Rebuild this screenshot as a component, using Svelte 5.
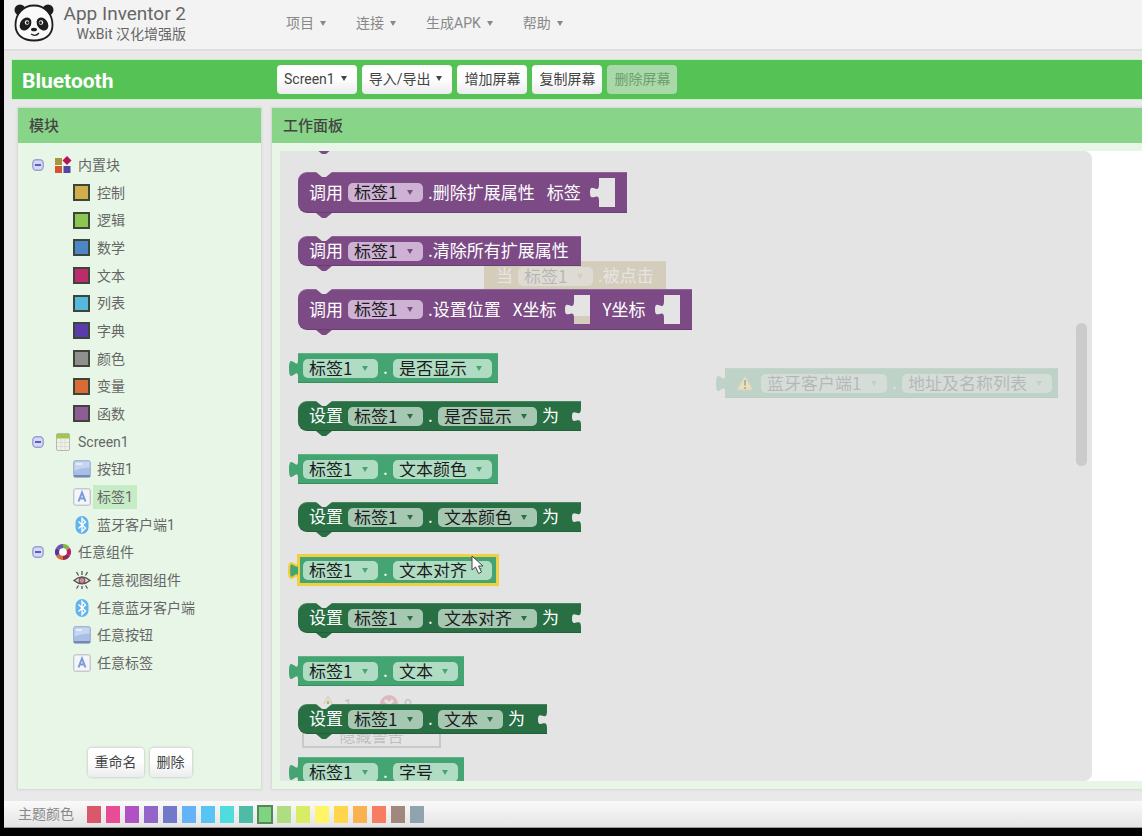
<script>
  const menus = ['项目', '连接', '生成APK', '帮助'];

  const tools = [
    { text: 'Screen1', arrow: true },
    { text: '导入/导出', arrow: true },
    { text: '增加屏幕' },
    { text: '复制屏幕' },
    { text: '删除屏幕', disabled: true }
  ];

  const tree = [
    { root: true, icon: 'blocks', text: '内置块' },
    { color: '#cfae4b', text: '控制' },
    { color: '#8bc653', text: '逻辑' },
    { color: '#4d86c6', text: '数学' },
    { color: '#bc2c6c', text: '文本' },
    { color: '#55b9dc', text: '列表' },
    { color: '#5a3bae', text: '字典' },
    { color: '#8f8f8f', text: '颜色' },
    { color: '#d96b36', text: '变量' },
    { color: '#8f5c98', text: '函数' },
    { root: true, icon: 'screen', text: 'Screen1' },
    { icon: 'button', text: '按钮1' },
    { icon: 'label', text: '标签1' },
    { icon: 'bluetooth', text: '蓝牙客户端1' },
    { root: true, icon: 'ring', text: '任意组件' },
    { icon: 'eye', text: '任意视图组件' },
    { icon: 'bluetooth', text: '任意蓝牙客户端' },
    { icon: 'button', text: '任意按钮' },
    { icon: 'label', text: '任意标签' }
  ];

  const blocks = [
    { kind: 'call', method: '.删除扩展属性', args: [{ name: '标签' }] },
    { kind: 'call', method: '.清除所有扩展属性', args: [] },
    { kind: 'call', method: '.设置位置', args: [{ name: 'X坐标', behind: true }, { name: 'Y坐标' }] },
    { kind: 'get', prop: '是否显示' },
    { kind: 'set', prop: '是否显示' },
    { kind: 'get', prop: '文本颜色' },
    { kind: 'set', prop: '文本颜色' },
    { kind: 'get', prop: '文本对齐', active: true },
    { kind: 'set', prop: '文本对齐' },
    { kind: 'get', prop: '文本' },
    { kind: 'set', prop: '文本' },
    { kind: 'get', prop: '字号' }
  ];

  const swatches = [
    '#d9596b', '#e84c92', '#b152c4', '#9265c9', '#7279c9', '#64b2f7',
    '#57c4f3', '#50dbdc', '#4dbca6', '#80d480', '#aede80', '#d9ec66',
    '#fff566', '#ffd54a', '#fab150', '#f77d62', '#a1887f', '#8fa4ae'
  ];

  let selected = $state(12);
  let theme = $state('#80d480');
</script>

{#snippet arrow()}
  <svg class="arrow" viewBox="0 0 6 5" aria-hidden="true"><path d="M0 0h6L3 5z" fill="currentColor" /></svg>
{/snippet}

{#snippet pick(text)}
  <span class="pick">
    <select aria-label={text}><option>{text}</option></select>
    {@render arrow()}
  </span>
{/snippet}

{#snippet tab()}
  <svg class="tab" viewBox="0 5 8 15" preserveAspectRatio="none" aria-hidden="true">
    <path d="M8 5c0 10-8-8-8 7.500s8-2.500 8 7.500" />
  </svg>
{/snippet}

{#snippet connectors()}
  <svg class="notch" viewBox="0 0 16 5" aria-hidden="true"><path d="M0 0L6 5h4L16 0z" /></svg>
  <svg class="bump" viewBox="0 0 16 5" aria-hidden="true"><path d="M0 0L6 5h4L16 0z" /></svg>
{/snippet}

{#snippet icon(name)}
  <svg class="icon" viewBox="0 0 18 18" aria-hidden="true">
    {#if name === 'blocks'}
      <rect x="1" y="2" width="7" height="7" fill="#a8953c" />
      <path d="M13 0l4.500 4.500L13 9 8.500 4.500z" fill="#b31557" />
      <rect x="1" y="10" width="7" height="7" fill="#d8532b" />
      <rect x="9.500" y="10" width="7" height="7" fill="#5246a5" />
    {:else if name === 'screen'}
      <rect x="2.500" y=".5" width="13" height="17" rx="1.500" fill="#f1f1ec" stroke="#b5b9ae" />
      <path d="M2.500 1h13v4.500h-13z" fill="#a3c552" />
      <path d="M3 9.500h12M3 13.500h12M7 6v11M11 6v11" stroke="#d8d8d2" stroke-width=".8" />
    {:else if name === 'button'}
      <rect x=".7" y=".7" width="16.600" height="16.600" rx="1.500" fill="#a9bfe5" stroke="#9cabc8" />
      <path d="M1.500 1.500h15v6c-5 0-9 1-15 3z" fill="#c5d5f2" />
      <path d="M3 3h6v2H3z" fill="#e6edfb" />
      <path d="M1 16h16" stroke="#7388b4" stroke-width="2" />
    {:else if name === 'label'}
      <rect x=".8" y=".8" width="16.400" height="16.400" rx="1.500" fill="#f3f5fb" stroke="#b4b6bb" />
      <path d="M5.500 13.500L9 4.500l3.500 9M6.800 10.500h4.400" fill="none" stroke="#7d9bd6" stroke-width="2" />
    {:else if name === 'bluetooth'}
      <rect x="2.500" y="0" width="13" height="18" rx="6.500" fill="#5fb4ee" />
      <path d="M5.500 5.500l7 6.500L9 15.500v-13L12.500 6l-7 6.500" fill="none" stroke="#fff" stroke-width="1.400" />
    {:else if name === 'ring'}
      <g fill="none" stroke-width="4.500">
        <path d="M9 3.200A5.800 5.800 0 0 1 14 6.100" stroke="#7fb83c" />
        <path d="M14 6.100A5.800 5.800 0 0 1 14 11.900" stroke="#c21a68" />
        <path d="M14 11.900A5.800 5.800 0 0 1 9 14.800" stroke="#8e2b55" />
        <path d="M9 14.800A5.800 5.800 0 0 1 4 11.900" stroke="#dd6d38" />
        <path d="M4 11.900A5.800 5.800 0 0 1 4 6.100" stroke="#5335a0" />
        <path d="M4 6.100A5.800 5.800 0 0 1 9 3.200" stroke="#6c56b4" />
      </g>
      <circle cx="9" cy="9" r="3.800" fill="#fff" />
    {:else if name === 'eye'}
      <path d="M1 9.500Q9 2.500 17 9.500 9 16 1 9.500z" fill="#e9dcdc" stroke="#5b5252" stroke-width="1.500" />
      <circle cx="9" cy="9.500" r="3" fill="#c58d97" stroke="#594a4e" />
      <path d="M9 4V0M5.500 4.500L3.500 1M12.500 4.500L14.500 1M9 15v3M5.500 14.500L3.500 17.500M12.500 14.500l2 3" stroke="#555" stroke-width="1.300" />
    {/if}
  </svg>
{/snippet}

<div class="app">
  <header>
    <svg class="panda" viewBox="0 0 40 38" role="img" aria-label="App Inventor 2">
      <circle cx="6" cy="6" r="5.500" fill="#1d1d1d" />
      <circle cx="34" cy="6" r="5.500" fill="#1d1d1d" />
      <path d="M20 1.500C31 1.500 38.500 10 38.500 21 38.500 31 31 36.500 20 36.500S1.500 31 1.500 21C1.500 10 9 1.500 20 1.500z" fill="#fafafa" stroke="#1d1d1d" stroke-width="1.800" />
      <ellipse cx="11.500" cy="20" rx="5.300" ry="7" transform="rotate(35 11.500 20)" fill="#1d1d1d" />
      <ellipse cx="28.500" cy="20" rx="5.300" ry="7" transform="rotate(-35 28.500 20)" fill="#1d1d1d" />
      <circle cx="13" cy="18.500" r="2.200" fill="#fff" /><circle cx="13.400" cy="18.700" r="1.400" fill="#222" />
      <circle cx="27" cy="18.500" r="2.200" fill="#fff" /><circle cx="26.600" cy="18.700" r="1.400" fill="#222" />
      <ellipse cx="20" cy="25.500" rx="3" ry="1.800" fill="#1d1d1d" />
      <path d="M17 30q4.500 3 8-1" fill="none" stroke="#1d1d1d" stroke-width="1.200" />
    </svg>
    <div class="brand"><span>App Inventor 2</span><small>WxBit 汉化增强版</small></div>
    <nav>
      {#each menus as m}
        <button type="button">{m}{@render arrow()}</button>
      {/each}
    </nav>
  </header>

  <div class="toolbar">
    <h1>Bluetooth</h1>
    {#each tools as t}
      <button type="button" class="btn" disabled={t.disabled}>{t.text}{#if t.arrow}{@render arrow()}{/if}</button>
    {/each}
  </div>

  <main>
    <section class="panel side">
      <h2>模块</h2>
      <ul>
        {#each tree as n, i}
          <li class:root={n.root}>
            {#if n.root}
              <button type="button" class="fold" aria-label="-">
                <svg viewBox="0 0 12 12" aria-hidden="true">
                  <rect x=".8" y=".8" width="10.400" height="10.400" rx="3.500" fill="#d5d9f8" stroke="#9a9fd6" stroke-width="1.400" />
                  <path d="M3 6h6" stroke="#4d52b0" stroke-width="1.800" />
                </svg>
              </button>
            {/if}
            {#if n.color}
              <i class="chip" style:background={n.color}></i>
            {:else}
              {@render icon(n.icon)}
            {/if}
            <button type="button" class="node" class:on={selected === i} onclick={() => (selected = i)}>{n.text}</button>
          </li>
        {/each}
      </ul>
      <div class="actions">
        <button type="button" class="btn">重命名</button>
        <button type="button" class="btn">删除</button>
      </div>
    </section>

    <section class="panel work">
      <h2>工作面板</h2>
      <div class="canvas">
        <div class="placed when">
          <div class="block event"><span>当</span>{@render pick('标签1')}<span class="method">.被点击</span></div>
        </div>
        <div class="placed client">
          <div class="block get">
            {@render tab()}
            <svg class="warn" viewBox="0 0 18 16" aria-hidden="true">
              <path d="M9 1L17 15H1z" fill="#ffef3a" stroke="#b9a23a" stroke-linejoin="round" />
              <path d="M9 5v5.500M9 12v2" stroke="#000" stroke-width="2" />
            </svg>
            {@render pick('蓝牙客户端1')}<span class="dot">.</span>{@render pick('地址及名称列表')}
          </div>
        </div>
        <div class="placed warnings">
          <div class="counts">
            <svg viewBox="0 0 20 18" aria-hidden="true"><path d="M10 1L19 17H1z" fill="#ffef3a" stroke="#b98a3a" /><path d="M10 6v6M10 14v2" stroke="#000" stroke-width="2" /></svg>
            <span>1</span>
            <svg class="err" viewBox="0 0 18 18" aria-hidden="true"><circle cx="9" cy="9" r="9" fill="#e2263f" /><path d="M5 5l8 8M13 5l-8 8" stroke="#fff" stroke-width="3" /></svg>
            <span>0</span>
          </div>
          <button type="button">隐藏警告</button>
        </div>

        <div class="flyout">
          <svg class="bump first" viewBox="0 0 16 5" aria-hidden="true"><path d="M0 0L6 5h4L16 0z" /></svg>
          {#each blocks as b}
            <div class="block {b.kind}" class:tall={b.args?.length} class:active={b.active}>
              {#if b.kind === 'get'}
                {@render tab()}
              {:else}
                {@render connectors()}
                <span>{b.kind === 'call' ? '调用' : '设置'}</span>
              {/if}
              {@render pick('标签1')}
              {#if b.kind === 'call'}
                <span class="method">{b.method}</span>
                {#each b.args as a}
                  <span class="arg">{a.name}</span>
                  <svg class="socket" viewBox="0 0 25 29" aria-hidden="true">
                    <path d="M9 0h16v29H9v-6c0-11-9 3-9-8.500S9 18 9 6z" />
                    {#if a.behind}<path class="peek" d="M9 21h16v8H9z" />{/if}
                  </svg>
                {/each}
              {:else}
                <span class="dot">.</span>
                {@render pick(b.prop)}
                {#if b.kind === 'set'}
                  <span>为</span>
                  <svg class="inlet" viewBox="0 0 9 17" aria-hidden="true"><path d="M9 0C9 12 0-2 0 8.500S9 6 9 17z" /></svg>
                {/if}
              {/if}
              {#if b.active}
                <svg class="pointer" viewBox="0 0 13 20" aria-hidden="true">
                  <path d="M1 1v14l3.500-3 3 6.500 3-1.500-3-6H12z" fill="#fff" stroke="#444" />
                </svg>
              {/if}
            </div>
          {/each}
          <i class="thumb"></i>
        </div>
      </div>
    </section>
  </main>

  <footer>
    <span>主题颜色</span>
    <div class="swatches">
      {#each swatches as s}
        <input type="radio" name="theme" value={s} aria-label={s} bind:group={theme} style:background={s} />
      {/each}
    </div>
  </footer>
</div>

<style>
  :global(body) { margin: 0; background: #000; }
  * { box-sizing: border-box; }
  button, select { font: inherit; color: inherit; border: 0; background: none; padding: 0; margin: 0; }
  svg { display: block; flex: none; }

  .app {
    height: 100vh;
    display: flex;
    flex-direction: column;
    overflow: hidden;
    border-left: 4px solid #000;
    border-bottom: 8px solid #000;
    background: #e9e9e9;
    color: #666;
    font: 14px/20px Roboto, "Noto Sans CJK SC", sans-serif;
  }

  header {
    flex: none;
    display: flex;
    height: 51px;
    padding-left: 10px;
    background: #f3f3f3;
    border-bottom: 2px solid #dedede;
  }
  .panda { width: 40px; height: 38px; margin-top: 4px; }
  .brand { width: 124px; margin-left: 8px; padding-top: 2px; text-align: right; white-space: nowrap; }
  .brand span { display: block; font-size: 19px; line-height: 24px; }
  .brand small { display: block; font-size: 14px; line-height: 16px; }
  nav { display: flex; gap: 30px; align-items: center; margin-left: 100px; height: 46px; color: #888; }
  nav button { display: flex; align-items: center; gap: 6px; }
  .arrow { width: 6px; height: 5px; }

  .toolbar {
    flex: none;
    display: flex;
    align-items: center;
    gap: 5px;
    height: 39px;
    margin: 9px 0 9px 8px;
    padding-left: 10px;
    background: #54c254;
    box-shadow: 0 0 0 1px #c9eec9;
  }
  h1 { width: 250px; margin: 0; padding-top: 2px; color: #fff; font-size: 21px; line-height: 24px; }
  .btn {
    display: flex;
    align-items: center;
    gap: 6px;
    height: 29px;
    padding: 0 7px 2px;
    border-radius: 4px;
    background: linear-gradient(#fff, #fdfdfd 50%, #ececef);
    color: #444;
    white-space: nowrap;
  }
  .btn .arrow { margin-right: 3px; }
  .btn:disabled { background: #a9d9a9; color: #6da06d; }

  main { flex: 1; min-height: 0; display: flex; gap: 11px; padding-left: 14px; }
  .panel { display: flex; flex-direction: column; background: #e7f6e7; box-shadow: 0 0 2px 1px #d2d6d2; }
  h2 { flex: none; margin: 0; padding: 2px 0 0 11px; background: #88d488; color: #444; font-size: 15px; font-weight: 500; line-height: 33px; }
  .side { flex: none; width: 243px; }
  .work { flex: 1; min-width: 0; }

  ul { flex: 1; display: grid; grid-auto-rows: 1fr; margin: 0; padding: 8px 0 0; list-style: none; }
  li { display: flex; align-items: center; padding-left: 55px; }
  li.root { padding-left: 14px; }
  .fold { margin-right: 10px; }
  .fold svg { width: 12px; height: 12px; }
  .icon { width: 18px; height: 18px; }
  .chip { width: 17px; height: 17px; margin-right: 1px; border: 2px solid #3d4438; }
  .node { margin-left: 2px; padding: 2px 4px; white-space: nowrap; }
  .node.on { background: #c6ecc6; }
  .actions { display: flex; justify-content: center; gap: 6px; padding: 71px 0 12px; }
  .actions .btn { box-shadow: 0 0 2px 1px #cfd6cf; }

  .canvas { position: relative; flex: 1; min-height: 0; margin: 8px 0 8px 8px; overflow: hidden; background: #fff; }
  .flyout {
    position: relative;
    width: 812px;
    max-width: 100%;
    height: 100%;
    padding: 21px 0 0 18px;
    overflow: hidden;
    border-radius: 0 8px 8px 0;
    background: rgba(221, 221, 221, .8);
  }
  .thumb { position: absolute; top: 172px; right: 5px; width: 11px; height: 143px; border-radius: 6px; background: #cbcbcb; }

  .block {
    position: relative;
    display: flex;
    align-items: center;
    gap: 5px;
    width: max-content;
    height: 30px;
    margin-bottom: 23px;
    color: #fff;
    font: 17px/20px "Noto Sans CJK SC", sans-serif;
    white-space: nowrap;
    box-shadow: inset 0 1px rgba(255, 255, 255, .15), inset 0 -1px rgba(0, 0, 0, .15);
  }
  .block > span:not(.pick) { padding-bottom: 2px; }
  .tall { height: 41px; }
  .call, .set { padding: 0 12px 0 11px; border-radius: 9px 0 0 9px; }
  .call { background: #7c4b86; --fill: #7c4b86; --pick: #cdb2d4; }
  .set { background: #286f43; --fill: #286f43; --pick: #a6c8b2; padding-right: 0; }
  .get { background: #45a572; --fill: #45a572; --pick: #b0dcc4; padding: 0 6px 0 5px; margin-bottom: 18px; }
  .event { background: #b18e35; --fill: #b18e35; --pick: #dfd0a8; padding: 0 12px; }

  .pick { display: grid; align-items: center; height: 19px; border-radius: 5px; background: var(--pick); color: #1c1c1c; }
  .pick select { grid-area: 1 / 1; height: 19px; padding: 0 25px 2px 6px; appearance: none; line-height: 17px; outline: 0; }
  .pick .arrow { grid-area: 1 / 1; justify-self: end; margin-right: 10px; color: var(--fill); pointer-events: none; }
  .dot { width: 5px; }
  .arg { margin-left: 7px; }

  .tab { position: absolute; left: -9px; top: 7px; width: 9px; height: 17px; fill: var(--fill); overflow: visible; }
  .notch, .bump { position: absolute; left: 18px; width: 16px; height: 5px; }
  .notch { top: 0; fill: #e4e4e4; }
  .bump { top: 100%; fill: var(--fill); }
  .bump.first { top: -2px; left: 36px; fill: #7c4b86; }
  .socket { width: 25px; height: 29px; margin-left: 4px; fill: #e4e4e4; }
  .peek { fill: #d4cdbb; }
  .inlet { width: 9px; height: 17px; margin-left: 8px; fill: #e4e4e4; }

  .active { box-shadow: 0 0 0 1px #f0d040, inset 0 0 0 2px #f0d040; }
  .active .tab path { stroke: #f0d040; stroke-width: 2; }
  .pointer { position: absolute; left: 173px; top: 0; width: 13px; height: 20px; }

  .placed { position: absolute; }
  .when { left: 204px; top: 110px; }
  .client { left: 445px; top: 217px; }
  .client .get { padding-left: 11px; }
  .warn { width: 18px; height: 16px; margin-right: 2px; }
  .warnings { left: 22px; top: 544px; width: 139px; color: #444; }
  .counts { display: flex; gap: 6px; padding-left: 16px; height: 30px; }
  .counts svg { width: 20px; height: 18px; }
  .counts .err { margin-left: 22px; width: 18px; }
  .warnings button { width: 100%; height: 23px; border: 2px solid #777; font-size: 16px; line-height: 16px; }

  footer {
    flex: none;
    display: flex;
    align-items: center;
    gap: 13px;
    height: 27px;
    margin-top: 12px;
    padding-left: 14px;
    background: linear-gradient(#fafafa, #e4e4e4);
    border-bottom: 1px solid #999;
    color: #888;
  }
  .swatches { display: flex; gap: 5px; }
  .swatches input { appearance: none; width: 14px; height: 17px; margin: 0; }
  .swatches input:checked { outline: 2px solid #55875a; outline-offset: -1px; }
</style>
